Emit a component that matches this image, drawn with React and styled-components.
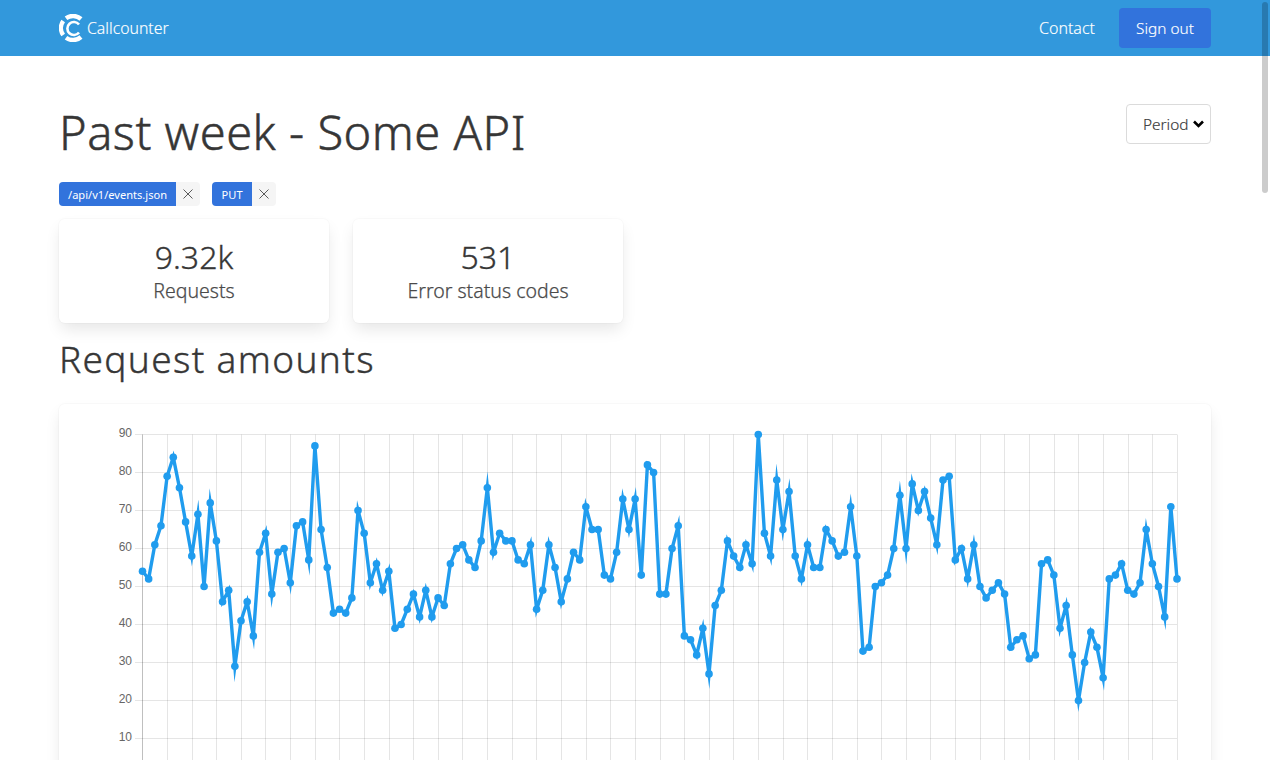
import React from 'react';
import styled, { createGlobalStyle } from 'styled-components';

const FONT = '"Noto Sans", "Open Sans", sans-serif';

const Global = createGlobalStyle`
  html, body { margin: 0; padding: 0; height: 760px; overflow: hidden; background: #fff; }
  body { font-family: ${FONT}; font-size: 16px; font-weight: 300; color: #4a4a4a; }
  * { box-sizing: border-box; }
`;

const Navbar = styled.nav`
  height: 56px;
  background: #3298dc;
`;
const Container = styled.div`
  width: 1152px;
  margin: 0 auto;
`;
const NavInner = styled(Container)`
  height: 100%;
  display: flex;
  align-items: center;
  justify-content: space-between;
`;
const Brand = styled.a`
  display: flex;
  align-items: center;
  gap: 4px;
  color: #fff;
  font-size: 15.8px;
  -webkit-text-stroke: 0.15px #fff;
`;
const NavRight = styled.div`
  display: flex;
  align-items: center;
  gap: 24px;
`;
const NavLink = styled.a`
  color: #fff;
  font-size: 16px;
  -webkit-text-stroke: 0.15px #fff;
`;
const NavButton = styled.a`
  display: flex;
  align-items: center;
  justify-content: center;
  width: 92px;
  height: 40px;
  border-radius: 4px;
  background: #3273dc;
  color: #fff;
  font-size: 15.4px;
  -webkit-text-stroke: 0.15px #fff;
`;
const Main = styled(Container)`
  padding-top: 48px;
`;
const HeadRow = styled.div`
  display: flex;
  justify-content: space-between;
  align-items: flex-start;
  margin-bottom: 24px;
`;
const Title = styled.h1`
  margin: 0;
  font-size: 47px;
  font-weight: 300;
  line-height: 56px;
  height: 54px;
  letter-spacing: 0.5px;
  color: #363636;
  -webkit-text-stroke: 0.5px #363636;
`;
const SelectWrap = styled.div`
  position: relative;
  width: 85px;
  height: 40px;
`;
const PeriodSelect = styled.select`
  appearance: none;
  display: block;
  width: 100%;
  height: 100%;
  padding: 0 0 0 16px;
  border: 1px solid #dbdbdb;
  border-radius: 4px;
  background: #fff;
  color: #363636;
  font-family: ${FONT};
  font-size: 15.4px;
  font-weight: 300;
  -webkit-text-stroke: 0.15px #363636;
`;
const Chevron = styled.svg`
  position: absolute;
  top: 16px;
  right: 7px;
  pointer-events: none;
`;
const TagRow = styled.div`
  display: flex;
  gap: 12px;
  margin-bottom: 13px;
`;
const Tag = styled.div`
  display: flex;
  height: 24px;
  border-radius: 4px;
  overflow: hidden;
  font-size: 11.1px;
  font-weight: 400;
`;
const TagLabel = styled.span`
  display: flex;
  align-items: center;
  justify-content: center;
  min-width: 40px;
  padding: 0 9px;
  background: #3273dc;
  color: #fff;
`;
const TagClose = styled.span`
  display: flex;
  align-items: center;
  justify-content: center;
  width: 24px;
  background: #f5f5f5;
`;
const StatRow = styled.div`
  display: flex;
  gap: 24px;
  margin-bottom: 15px;
`;
const Card = styled.div`
  background: #fff;
  border-radius: 6px;
  box-shadow: 0 8px 16px -2px rgba(10, 10, 10, 0.1), 0 0 0 1px rgba(10, 10, 10, 0.02);
`;
const StatCard = styled(Card)`
  width: 270px;
  height: 104px;
  display: flex;
  flex-direction: column;
  align-items: center;
  padding-top: 19px;
`;
const StatValue = styled.div`
  font-size: 32px;
  line-height: 38px;
  margin-bottom: 1px;
  color: #363636;
  -webkit-text-stroke: 0.35px #363636;
`;
const StatLabel = styled.div`
  font-size: 19.5px;
  line-height: 28px;
  color: #4a4a4a;
  -webkit-text-stroke: 0.25px #4a4a4a;
`;
const Subtitle = styled.h2`
  margin: 0 0 25px;
  font-size: 37px;
  font-weight: 300;
  line-height: 41px;
  letter-spacing: 1.35px;
  color: #363636;
  -webkit-text-stroke: 0.4px #363636;
`;
const ChartCard = styled(Card)`
  height: 600px;
  overflow: hidden;
`;
const ChartSvg = styled.svg`
  display: block;
`;
const AxisLabel = styled.text`
  font-family: "Liberation Sans", Arial, sans-serif;
  font-size: 12px;
  font-weight: 400;
  fill: #666;
`;
const ScrollThumb = styled.div`
  position: fixed;
  top: 2px;
  right: 2px;
  width: 6px;
  height: 191px;
  border-radius: 3px;
  background: rgba(0, 0, 0, 0.2);
`;

const DATA = [54,52,61,66,79,84,76,67,58,69,50,72,62,46,49,29,41,46,37,59,64,48,59,60,51,66,67,57,87,65,55,43,44,43,47,70,64,51,56,49,54,39,40,
44,48,42,49,42,47,45,56,60,61,57,55,62,76,59,64,62,62,57,56,61,44,49,61,55,46,52,59,57,71,65,65,53,52,59,73,65,73,53,82,80,48,48,
60,66,37,36,32,39,27,45,49,62,58,55,61,56,90,64,58,78,65,75,58,52,61,55,55,65,62,58,59,71,58,33,34,50,51,53,60,74,60,77,70,75,
68,61,78,79,57,60,52,61,50,47,49,51,48,34,36,37,31,32,56,57,53,39,45,32,20,30,38,34,26,52,53,56,49,48,51,65,56,50,42,71,52];

// Chart coordinates are local to the card (card origin = page 59,404).
const X0 = 142.5 - 59;
const XSTEP = (1177 - 142.5) / 168;
const Y90 = 434.5 - 404;
const yOf = v => Y90 + (90 - v) * 3.8;
const xOf = i => X0 + i * XSTEP;
const points = DATA.map((v, i) => `${xOf(i).toFixed(2)},${yOf(v).toFixed(2)}`).join(' ');
const vLines = Array.from({ length: 43 }, (_, i) => Math.round(142.3 + i * 24.63) - 59 + 0.5);
const hVals = [90, 80, 70, 60, 50, 40, 30, 20, 10, 0];

function Logo() {
  return (
    <svg width="24" height="28" viewBox="0 0 24 28" fill="none" stroke="#fff">
      <path d="M7 4.2 A12 12 0 0 1 22 5" strokeWidth="4.4" />
      <path d="M4.2 7 A12 12 0 0 0 4.2 21" strokeWidth="4.4" />
      <path d="M7 23.8 A12 12 0 0 0 22 23" strokeWidth="4.4" />
      <path d="M20 10.5 A6.5 6.5 0 1 0 20 18.5" strokeWidth="2.6" />
    </svg>
  );
}

function CloseIcon() {
  return (
    <svg width="10" height="10" viewBox="0 0 10 10" stroke="#4a4a4a" strokeWidth="0.9">
      <path d="M0.5 0.5 L9.5 9.5 M9.5 0.5 L0.5 9.5" />
    </svg>
  );
}

function Chart() {
  return (
    <ChartSvg width="1152" height="400" viewBox="0 0 1152 400">
      {hVals.map(v => (
        <line key={v} x1={76} x2={1118} y1={yOf(v)} y2={yOf(v)} stroke="rgba(0,0,0,0.1)" />
      ))}
      {vLines.map((x, i) => (
        <line key={i} x1={x} x2={x} y1={Y90} y2={400} stroke={i === 0 ? 'rgba(0,0,0,0.25)' : 'rgba(0,0,0,0.1)'} />
      ))}
      {hVals.slice(0, 9).map(v => (
        <AxisLabel key={v} x={73} y={yOf(v) + 2.5} textAnchor="end">{v}</AxisLabel>
      ))}
      <polyline points={points} fill="none" stroke="#209cee" strokeWidth="3.4" strokeLinejoin="miter" strokeMiterlimit="10" />
      {DATA.map((v, i) => (
        <circle key={i} cx={xOf(i)} cy={yOf(v)} r="3.8" fill="#209cee" />
      ))}
    </ChartSvg>
  );
}

export default function App() {
  return (
    <>
      <Global />
      <Navbar>
        <NavInner>
          <Brand><Logo />Callcounter</Brand>
          <NavRight>
            <NavLink>Contact</NavLink>
            <NavButton>Sign out</NavButton>
          </NavRight>
        </NavInner>
      </Navbar>
      <Main>
        <HeadRow>
          <Title>Past week - Some API</Title>
          <SelectWrap>
            <PeriodSelect defaultValue="">
              <option value="">Period</option>
            </PeriodSelect>
            <Chevron width="11" height="8" viewBox="0 0 11 8" fill="none" stroke="#000" strokeWidth="2.6">
              <path d="M1 1.5 L5.5 6 L10 1.5" />
            </Chevron>
          </SelectWrap>
        </HeadRow>
        <TagRow>
          <Tag><TagLabel>/api/v1/events.json</TagLabel><TagClose><CloseIcon /></TagClose></Tag>
          <Tag><TagLabel>PUT</TagLabel><TagClose><CloseIcon /></TagClose></Tag>
        </TagRow>
        <StatRow>
          <StatCard><StatValue>9.32k</StatValue><StatLabel>Requests</StatLabel></StatCard>
          <StatCard><StatValue>531</StatValue><StatLabel>Error status codes</StatLabel></StatCard>
        </StatRow>
        <Subtitle>Request amounts</Subtitle>
        <ChartCard><Chart /></ChartCard>
      </Main>
      <ScrollThumb />
    </>
  );
}
